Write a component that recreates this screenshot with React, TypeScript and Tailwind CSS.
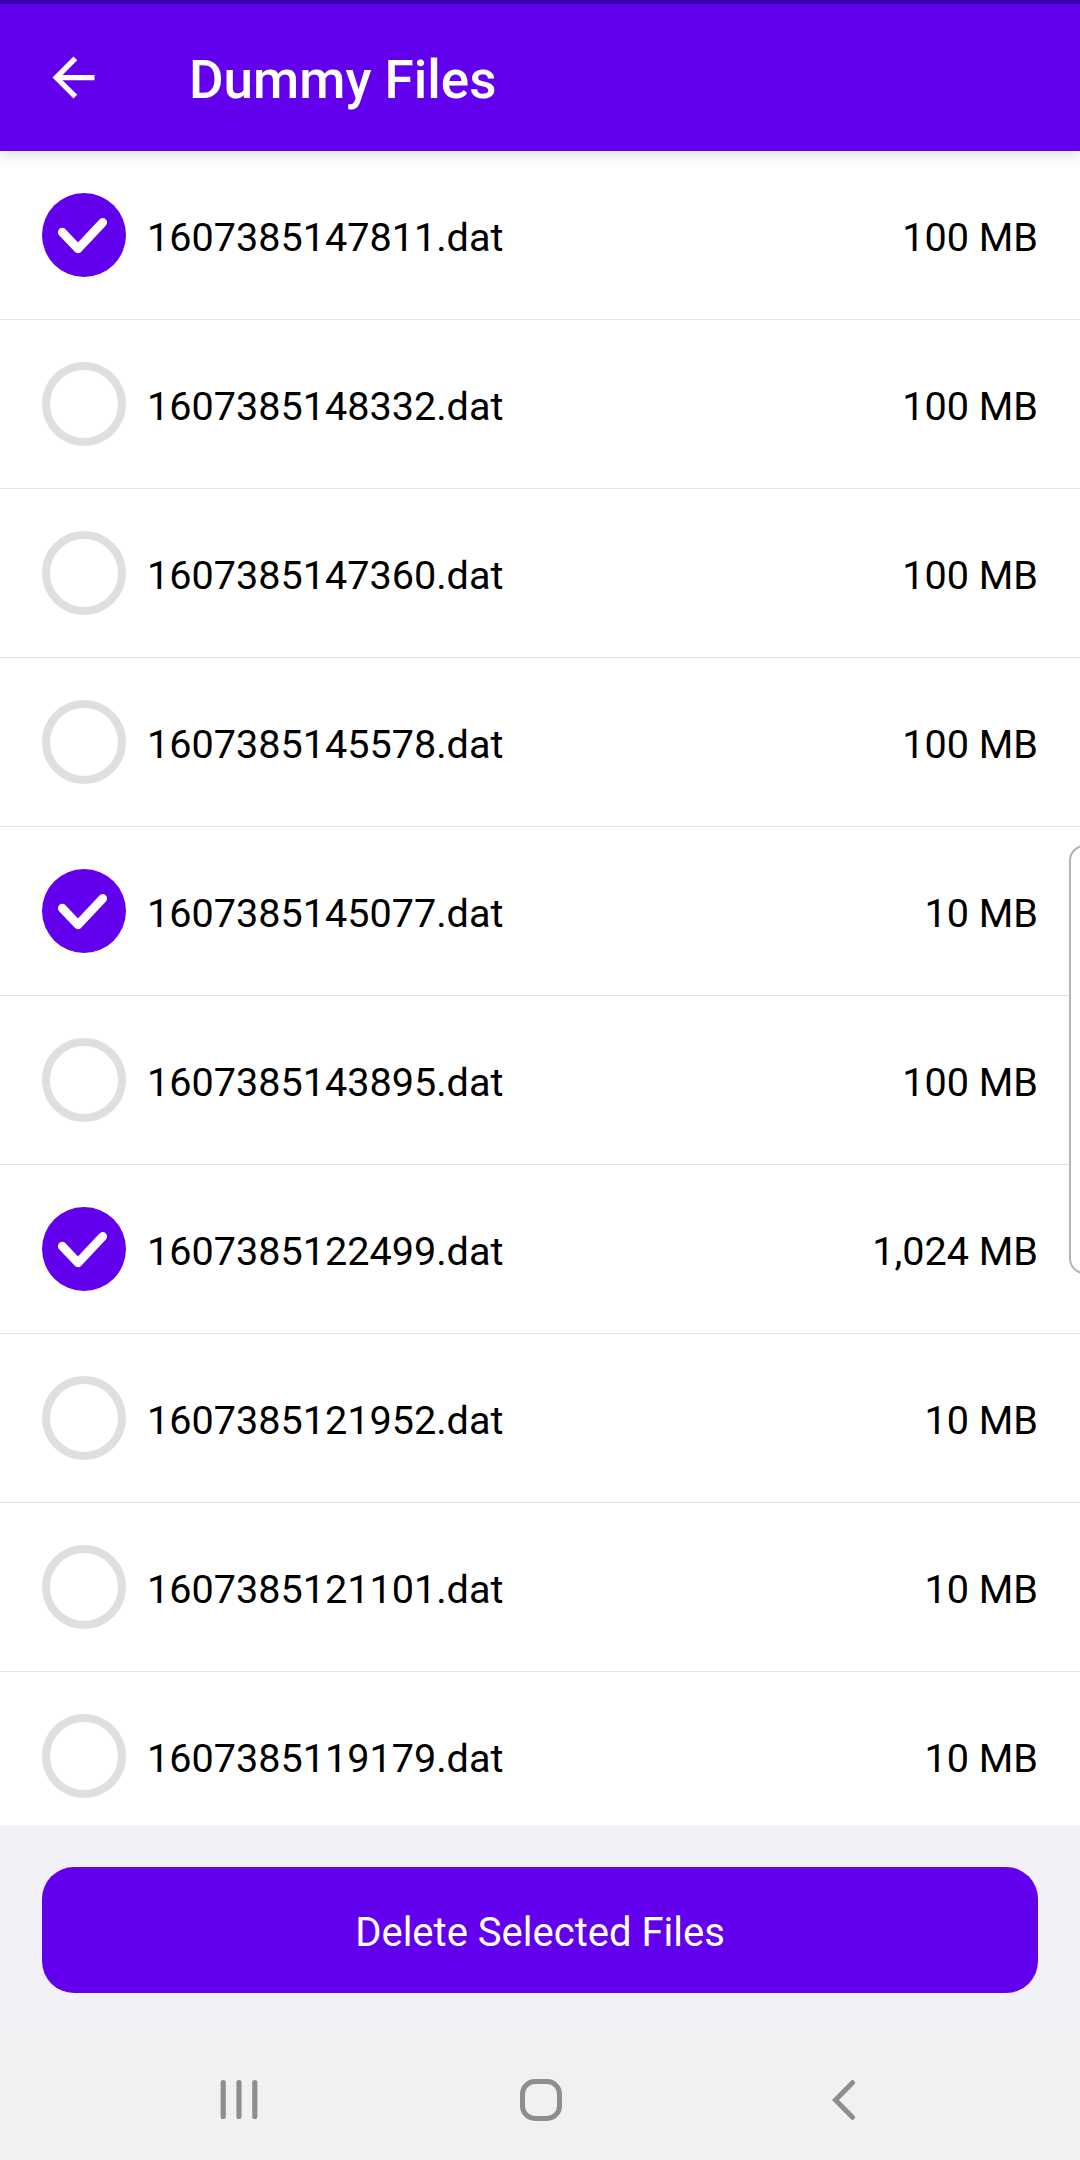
const files = [
  { name: '1607385147811.dat', size: '100 MB', selected: true },
  { name: '1607385148332.dat', size: '100 MB', selected: false },
  { name: '1607385147360.dat', size: '100 MB', selected: false },
  { name: '1607385145578.dat', size: '100 MB', selected: false },
  { name: '1607385145077.dat', size: '10 MB', selected: true },
  { name: '1607385143895.dat', size: '100 MB', selected: false },
  { name: '1607385122499.dat', size: '1,024 MB', selected: true },
  { name: '1607385121952.dat', size: '10 MB', selected: false },
  { name: '1607385121101.dat', size: '10 MB', selected: false },
  { name: '1607385119179.dat', size: '10 MB', selected: false },
]

function SelectMark({ selected }: { selected: boolean }) {
  if (!selected) {
    return <span className="h-21 w-21 shrink-0 rounded-full border-8 border-[#dfdfdf]" />
  }
  return (
    <span className="h-21 w-21 shrink-0 rounded-full bg-[#6200ee]">
      <svg viewBox="0 0 84 84" className="h-full w-full" fill="none" stroke="white" strokeWidth="8.8" strokeLinecap="round" strokeLinejoin="round">
        <path d="M20.3 39.2 36 55.8 60.7 29.4" />
      </svg>
    </span>
  )
}

function Header() {
  return (
    <header className="relative z-10 flex h-[151px] shrink-0 items-center border-t-4 border-[#3700b3] bg-[#6200ee] pl-[42px] text-white shadow-[0_3px_14px_rgba(0,0,0,0.16)]">
      <button aria-label="Back">
        <svg viewBox="0 0 24 24" className="h-[63px] w-[63px]" fill="currentColor">
          <path d="M20 11H7.83l5.59-5.59L12 4l-8 8 8 8 1.41-1.41L7.83 13H20v-2z" />
        </svg>
      </button>
      <h1 className="ml-[84px] pt-1 text-[53px] leading-[62px] font-medium">Dummy Files</h1>
    </header>
  )
}

function NavBar() {
  return (
    <nav className="flex h-[125px] shrink-0 items-center bg-[#f1f1f1] pt-1 pl-[218px] text-[#8e8e8e]">
      <svg viewBox="0 0 42 42" className="h-[42px] w-[42px]" stroke="currentColor" strokeWidth="5.2" strokeLinecap="round">
        <path d="M5.2 3.6V37.4M21 3.6V37.4M36.8 3.6V37.4" />
      </svg>
      <svg viewBox="0 0 42 42" className="ml-[260px] h-[42px] w-[42px]" fill="none" stroke="currentColor" strokeWidth="5">
        <rect x="2.5" y="2.5" width="37" height="37" rx="12.5" />
      </svg>
      <svg viewBox="0 0 26 42" className="ml-[270px] h-[42px] w-[26px]" fill="none" stroke="currentColor" strokeWidth="5" strokeLinecap="round">
        <path d="M20.5 3.7 3.5 21 20.5 38.3" />
      </svg>
    </nav>
  )
}

export default function App() {
  return (
    <div className="relative flex h-[2160px] w-[1080px] flex-col overflow-hidden bg-white font-[Roboto,sans-serif] text-black">
      <Header />

      <ul className="min-h-0 flex-1 overflow-hidden">
        {files.map((file) => (
          <li key={file.name} className="flex h-[169px] items-center border-b border-[#e4e4e4] px-[42px] text-[39.6px] leading-[46px]">
            <SelectMark selected={file.selected} />
            <span className="ml-[21px] flex-1 pt-[5px]">{file.name}</span>
            <span className="pt-[5px]">{file.size}</span>
          </li>
        ))}
      </ul>

      <footer className="h-[210px] shrink-0 bg-[#f2f1f7] px-[42px] pt-[42px]">
        <button className="h-[126px] w-full rounded-[32px] bg-[#6200ee] pt-1.5 text-[40px] text-white">
          Delete Selected Files
        </button>
      </footer>

      <NavBar />

      {/* edge panel handle, mostly off screen */}
      <div className="absolute top-[845px] -right-5 h-[429px] w-[31px] rounded-[16px] border-2 border-[#b4b4b4] bg-white" />
    </div>
  )
}
